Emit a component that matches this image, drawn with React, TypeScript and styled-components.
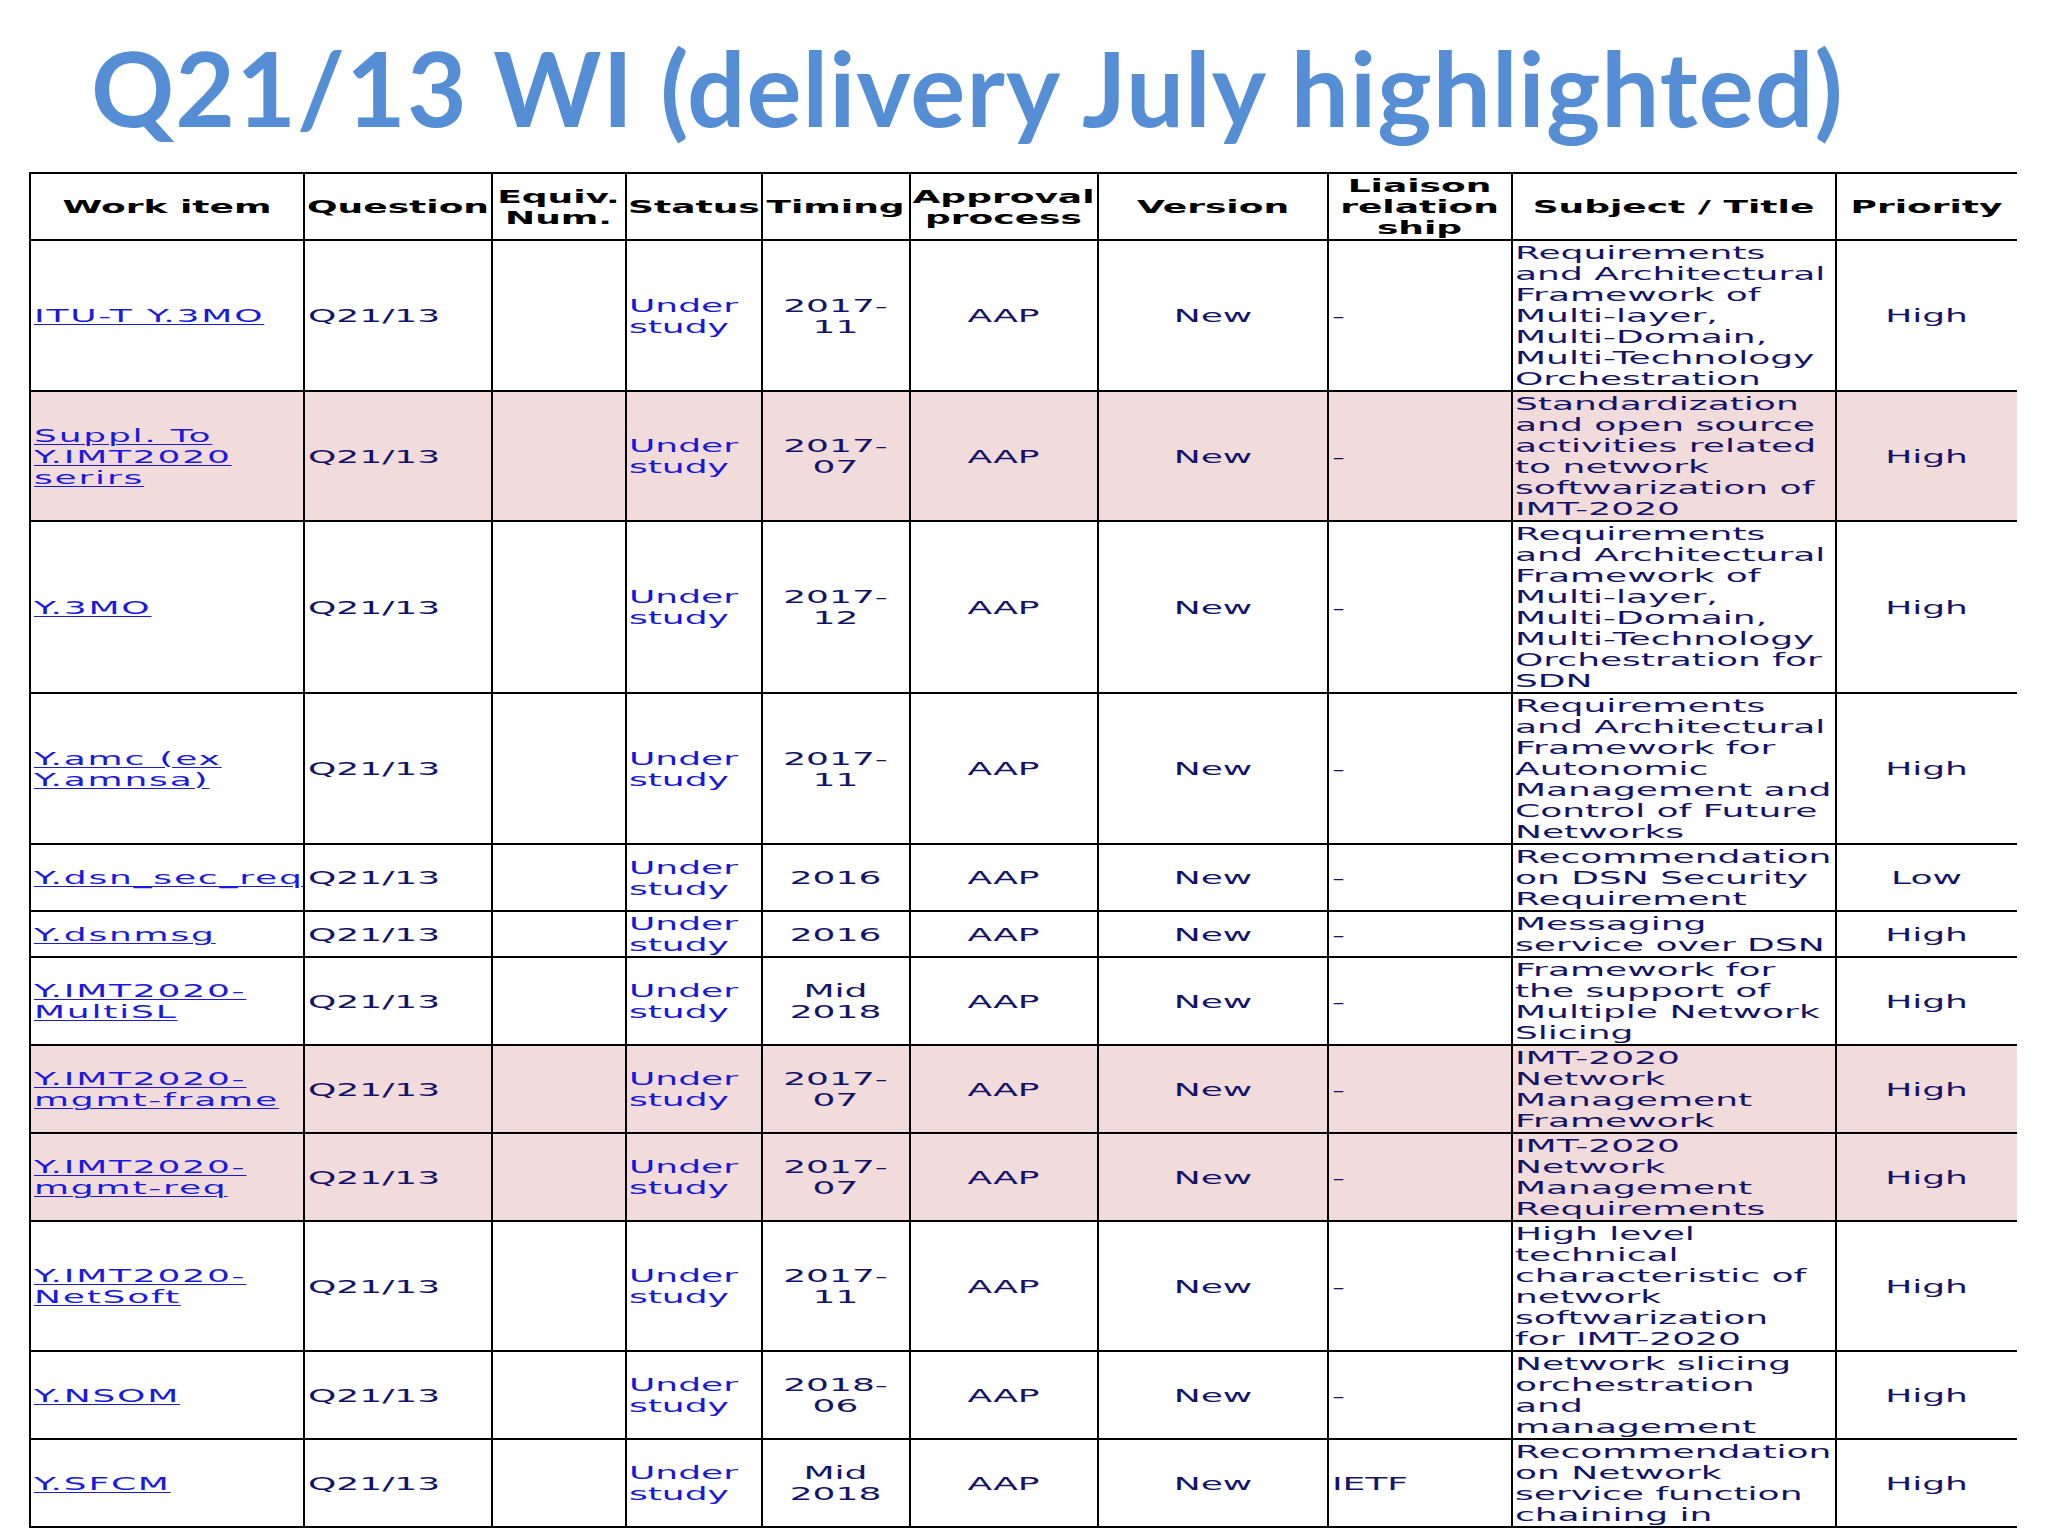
import React from 'react'
import styled, { createGlobalStyle } from 'styled-components'

const GlobalStyle = createGlobalStyle`
  html, body {
    margin: 0;
    padding: 0;
    background: #ffffff;
  }
`

type Row = {
  item: string[]
  timing: string[]
  liaison?: string
  subject: string[]
  priority?: string
  highlight?: boolean
}

const rows: Row[] = [
  {
    item: ['ITU-T Y.3MO'],
    timing: ['2017-', '11'],
    subject: [
      'Requirements',
      'and Architectural',
      'Framework of',
      'Multi-layer,',
      'Multi-Domain,',
      'Multi-Technology',
      'Orchestration',
    ],
  },
  {
    item: ['Suppl. To', 'Y.IMT2020', 'serirs'],
    timing: ['2017-', '07'],
    subject: [
      'Standardization',
      'and open source',
      'activities related',
      'to network',
      'softwarization of',
      'IMT-2020',
    ],
    highlight: true,
  },
  {
    item: ['Y.3MO'],
    timing: ['2017-', '12'],
    subject: [
      'Requirements',
      'and Architectural',
      'Framework of',
      'Multi-layer,',
      'Multi-Domain,',
      'Multi-Technology',
      'Orchestration for',
      'SDN',
    ],
  },
  {
    item: ['Y.amc (ex', 'Y.amnsa)'],
    timing: ['2017-', '11'],
    subject: [
      'Requirements',
      'and Architectural',
      'Framework for',
      'Autonomic',
      'Management and',
      'Control of Future',
      'Networks',
    ],
  },
  {
    item: ['Y.dsn_sec_req'],
    timing: ['2016'],
    subject: ['Recommendation', 'on DSN Security', 'Requirement'],
    priority: 'Low',
  },
  {
    item: ['Y.dsnmsg'],
    timing: ['2016'],
    subject: ['Messaging', 'service over DSN'],
  },
  {
    item: ['Y.IMT2020-', 'MultiSL'],
    timing: ['Mid', '2018'],
    subject: ['Framework for', 'the support of', 'Multiple Network', 'Slicing'],
  },
  {
    item: ['Y.IMT2020-', 'mgmt-frame'],
    timing: ['2017-', '07'],
    subject: ['IMT-2020', 'Network', 'Management', 'Framework'],
    highlight: true,
  },
  {
    item: ['Y.IMT2020-', 'mgmt-req'],
    timing: ['2017-', '07'],
    subject: ['IMT-2020', 'Network', 'Management', 'Requirements'],
    highlight: true,
  },
  {
    item: ['Y.IMT2020-', 'NetSoft'],
    timing: ['2017-', '11'],
    subject: [
      'High level',
      'technical',
      'characteristic of',
      'network',
      'softwarization',
      'for IMT-2020',
    ],
  },
  {
    item: ['Y.NSOM'],
    timing: ['2018-', '06'],
    subject: ['Network slicing', 'orchestration', 'and', 'management'],
  },
  {
    item: ['Y.SFCM'],
    timing: ['Mid', '2018'],
    liaison: 'IETF',
    subject: ['Recommendation', 'on Network', 'service function', 'chaining in'],
  },
]

// widths before the horizontal stretch (table is drawn at half width, then scaled x2)
const columns = [137, 94, 66.5, 68.5, 73.5, 94.5, 115, 91.5, 162.5, 90]

const headers: string[][] = [
  ['Work item'],
  ['Question'],
  ['Equiv.', 'Num.'],
  ['Status'],
  ['Timing'],
  ['Approval', 'process'],
  ['Version'],
  ['Liaison', 'relation', 'ship'],
  ['Subject / Title'],
  ['Priority'],
]

const Lines: React.FC<{ lines: string[] }> = ({ lines }) => (
  <>
    {lines.map((line, i) => (
      <React.Fragment key={i}>
        {i > 0 && <br />}
        {line}
      </React.Fragment>
    ))}
  </>
)

export default function App() {
  return (
    <Slide>
      <GlobalStyle />
      <Title>Q21/13 WI (delivery July highlighted)</Title>
      <Stretch>
        <Table>
          <colgroup>
            {columns.map((w, i) => (
              <col key={i} style={{ width: w }} />
            ))}
          </colgroup>
          <thead>
            <tr>
              {headers.map((h, i) => (
                <HeadCell key={i}>
                  <Lines lines={h} />
                </HeadCell>
              ))}
            </tr>
          </thead>
          <tbody>
            {rows.map((row, i) => (
              <BodyRow key={i} $highlight={row.highlight}>
                <Cell>
                  <ItemLink href="#">
                    <Lines lines={row.item} />
                  </ItemLink>
                </Cell>
                <Cell>Q21/13</Cell>
                <Cell />
                <Cell>
                  <Status>
                    Under
                    <br />
                    study
                  </Status>
                </Cell>
                <Cell $center>
                  <Lines lines={row.timing} />
                </Cell>
                <Cell $center>AAP</Cell>
                <Cell $center>New</Cell>
                <Cell>{row.liaison ?? '-'}</Cell>
                <Cell>
                  <Lines lines={row.subject} />
                </Cell>
                <Cell $center $last>
                  {row.priority ?? 'High'}
                </Cell>
              </BodyRow>
            ))}
          </tbody>
        </Table>
      </Stretch>
    </Slide>
  )
}

const Slide = styled.div`
  width: 2048px;
  height: 1536px;
  overflow: hidden;
  background: #ffffff;
  display: flex;
  flex-direction: column;
  padding-top: 25px;
  box-sizing: border-box;
`

const Title = styled.h1`
  margin: 0 0 23px 0;
  padding-left: 91px;
  height: 124px;
  font-family: Lato, 'Open Sans', sans-serif;
  font-weight: 700;
  font-size: 103px;
  line-height: 124px;
  letter-spacing: 1.1px;
  color: #558ed5;
  white-space: nowrap;
`

const Stretch = styled.div`
  margin-left: 29px;
  width: 993px;
  transform: scaleX(2);
  transform-origin: left top;
`

const Table = styled.table`
  width: 993px;
  table-layout: fixed;
  border-collapse: collapse;
  font-family: 'DejaVu Sans', Verdana, sans-serif;
  font-size: 18px;
  line-height: 21px;
  color: #13136b;
`

const HeadCell = styled.th`
  padding: 1px 1px;
  border-top: 2px solid #000;
  border-bottom: 2px solid #000;
  border-left: 1px solid #000;
  border-right: 1px solid #000;
  font-weight: bold;
  color: #000;
  text-align: center;
  vertical-align: middle;
  white-space: nowrap;
  overflow: visible;

  &:last-child {
    border-right: none;
  }
`

const BodyRow = styled.tr<{ $highlight?: boolean }>`
  background: ${p => (p.$highlight ? '#f2dcdb' : '#ffffff')};
`

const Cell = styled.td<{ $center?: boolean; $last?: boolean }>`
  padding: 1px 1.5px;
  border-top: 2px solid #000;
  border-bottom: 2px solid #000;
  border-left: 1px solid #000;
  border-right: ${p => (p.$last ? 'none' : '1px solid #000')};
  text-align: ${p => (p.$center ? 'center' : 'left')};
  vertical-align: middle;
  white-space: nowrap;
  overflow: visible;
`

const ItemLink = styled.a`
  color: #1a1ae0;
  letter-spacing: 0.9px;
  text-decoration: underline;
  text-decoration-thickness: 1px;
  text-underline-offset: 2px;
`

const Status = styled.span`
  color: #1818d8;
`
